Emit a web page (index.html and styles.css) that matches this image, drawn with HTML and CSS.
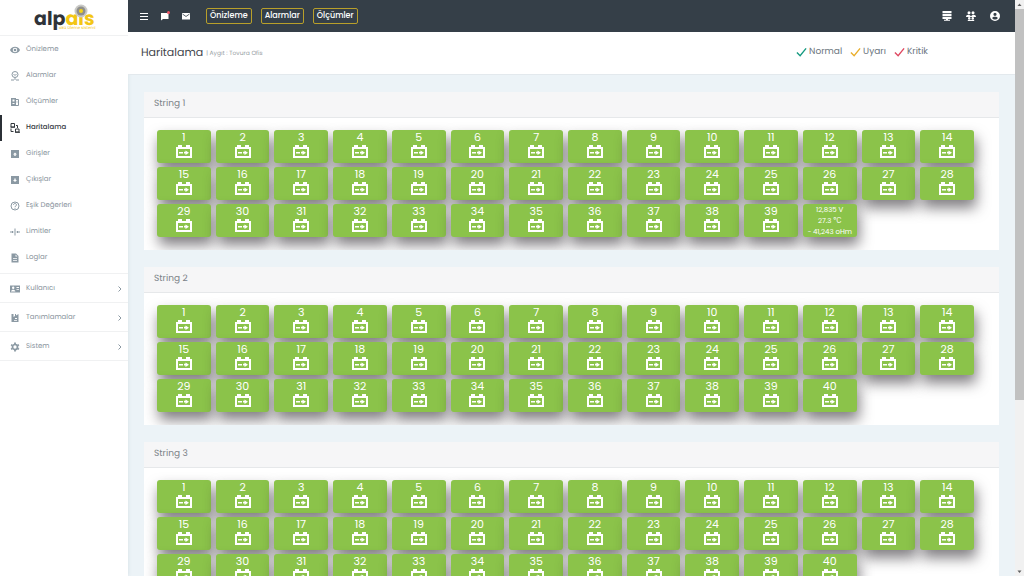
FILE: index.html
```html
<!DOCTYPE html>
<html lang="tr">
<head>
<meta charset="utf-8">
<title>Haritalama</title>
<link rel="stylesheet" href="styles.css">
</head>
<body>
<svg class="symbols" aria-hidden="true">
  <symbol id="battery" viewBox="0 0 16 13">
    <path fill-rule="evenodd" d="M2 0h4v2h4V0h4v2h2v11H0V2h2zM2 4v7h12V4zM3 7h4v1.500H3zM8 6.800h1.500V5.500L13 7.700 9.500 10V8.600H8z"/>
  </symbol>
  <symbol id="check" viewBox="0 0 12 10"><path d="M1 5.500l3.500 3.500L11 1" fill="none" stroke="currentColor" stroke-width="1.500"/></symbol>
  <symbol id="chevron" viewBox="0 0 6 8"><path d="M1.500 1.500l2.500 2.500-2.500 2.500" fill="none" stroke="currentColor"/></symbol>
</svg>
<div class="app">
  <aside class="sidebar">
    <a class="logo" href="#">
      <span class="logo-name">alp<span class="logo-accent">ais</span></span>
      <span class="logo-tag">akü izleme sistemi</span>
      <svg class="logo-sun" viewBox="0 0 14 14"><circle cx="7" cy="7" r="6.500" fill="#c9c9c6"/><circle cx="7" cy="7" r="4.500" fill="#8f8f8c"/><circle cx="7" cy="7" r="2" fill="#f3d21b"/></svg>
    </a>
    <nav>
      <ul class="menu">
        <li><a href="#"><svg viewBox="0 0 10 10"><path fill-rule="evenodd" d="M0 5c2-4.300 8-4.300 10 0-2 4.300-8 4.300-10 0zm5-2.300a2.300 2.300 0 1 0 0 4.600 2.300 2.300 0 0 0 0-4.600z"/><circle cx="5" cy="5" r="1.300"/></svg>Önizleme</a></li>
        <li><a href="#"><svg viewBox="0 0 10 10"><circle cx="5" cy="3.500" r="3" fill="none" stroke="currentColor"/><path d="M3.500 3l1.500 1.500L6.500 3M5 6.500V9M1 9h3M6 9h3" fill="none" stroke="currentColor"/></svg>Alarmlar</a></li>
        <li><a href="#"><svg viewBox="0 0 10 10"><path fill-rule="evenodd" d="M1 1h5v8H1zM2.500 2.500v2h2v-2zM2.500 6v1h2V6z"/><path d="M6 2.500h2.500v6H6M6.500 5h1" fill="none" stroke="currentColor"/></svg>Ölçümler</a></li>
        <li class="active"><a href="#" aria-current="page"><svg viewBox="0 0 10 10"><path d="M1 .5h3.500V4H1zM5.500 6H9v3H5.500zM1 5.500v3h2.500M6 2.500h1.500V5M.500 4.200H5M5 9.300h5" fill="none" stroke="currentColor"/></svg>Haritalama</a></li>
        <li><a href="#"><svg viewBox="0 0 10 10"><path fill-rule="evenodd" d="M1 1h8v8H1zM5 3.500l-2 2h1.300V7h1.400V5.500H7z"/></svg>Girişler</a></li>
        <li><a href="#"><svg viewBox="0 0 10 10"><path fill-rule="evenodd" d="M1 1h8v8H1zM5 7l2-2H5.700V3.500H4.300V5H3z"/></svg>Çıkışlar</a></li>
        <li><a href="#"><svg viewBox="0 0 10 10"><circle cx="5" cy="5" r="4" fill="none" stroke="currentColor"/><path d="M3.500 4c0-2 3-2 3 0 0 1-1.500 1-1.500 2M5 6.800v1" fill="none" stroke="currentColor"/></svg>Eşik Değerleri</a></li>
        <li><a href="#"><svg viewBox="0 0 10 10"><path d="M5 1.500v7M0 5h3.500M6.500 5H10M2.500 4v2M7.500 4v2" fill="none" stroke="currentColor"/></svg>Limitler</a></li>
        <li><a href="#"><svg viewBox="0 0 10 10"><path fill-rule="evenodd" d="M1.500.5h4.500L8.500 3v6.500h-7zM5.500 1.500v2h2zM3 5v.7h4V5zM3 7v.7h4V7z"/></svg>Loglar</a></li>
      </ul>
      <ul class="groups">
        <li><a href="#"><svg viewBox="0 0 10 10"><path fill-rule="evenodd" d="M0 1.500h10v7H0zM3.200 2.500a1.200 1.200 0 1 0 0 2.400 1.200 1.200 0 0 0 0-2.400zM1 7.500h4.400C5 5.200 1.400 5.200 1 7.500zM6.500 3v1H9V3zM6.500 5v.7H9V5z"/></svg>Kullanıcı<svg class="chevron"><use href="#chevron"/></svg></a></li>
        <li><a href="#"><svg viewBox="0 0 10 10"><path fill-rule="evenodd" d="M1.500 1h2v3L5 3V1h1v1.500L8.500 1v8h-7zM5 5v1h2V5zM4 7v.7h3V7z"/></svg>Tanımlamalar<svg class="chevron"><use href="#chevron"/></svg></a></li>
        <li><a href="#"><svg viewBox="0 0 10 10"><circle cx="5" cy="5" r="2.500" fill="none" stroke="currentColor" stroke-width="1.700"/><path d="M5 .5V2M5 8v1.500M1.100 2.800l1.300.7M7.600 6.500l1.300.7M1.100 7.200l1.300-.7M7.600 3.500l1.300-.7" stroke="currentColor" stroke-width="1.800"/></svg>Sistem<svg class="chevron"><use href="#chevron"/></svg></a></li>
      </ul>
    </nav>
  </aside>
  <div class="main">
    <header class="topbar">
      <button class="icon-btn" aria-label="Menü"><svg viewBox="0 0 10 10"><path d="M1 2.500h8M1 5.500h8M1 8.500h8" stroke="currentColor"/></svg></button>
      <button class="icon-btn" aria-label="Mesajlar"><svg viewBox="0 0 10 10"><path d="M1 2h7.500v6H3L1 9.500z"/><circle cx="8.500" cy="1.500" r="1.500" fill="#ef5565"/></svg></button>
      <button class="icon-btn" aria-label="Posta"><svg viewBox="0 0 10 10"><path d="M1 2h8v6.500H1z"/><path d="M1.500 3L5 5.500 8.500 3" fill="none" stroke="#353f48" stroke-width=".8"/></svg></button>
      <div class="shortcuts">
        <button>Önizleme</button><button>Alarmlar</button><button>Ölçümler</button>
      </div>
      <div class="tools">
        <button class="icon-btn" aria-label="Cihazlar"><svg viewBox="0 0 10 10"><path d="M.5 0h9v2.300h-9zM.5 3h9v2.300h-9zM.5 6h9v2h-9zM4 8h2v1H4zM2 8.700h6v1H2z"/></svg></button>
        <button class="icon-btn" aria-label="Kullanıcılar"><svg viewBox="0 0 10 10"><circle cx="3" cy="1.700" r="1.500"/><circle cx="7" cy="1.700" r="1.500"/><path d="M0 6c0-3 4-3 5-.5 1-2.500 5-2.500 5 .5z"/><circle cx="3.200" cy="7.300" r="1.200"/><circle cx="6.800" cy="7.300" r="1.200"/><path d="M1.600 10c0-2 2.600-2 3.400-.8.800-1.200 3.400-1.200 3.400.8z"/></svg></button>
        <button class="icon-btn" aria-label="Profil"><svg viewBox="0 0 10 10"><path fill-rule="evenodd" d="M5 0a5 5 0 1 0 0 10A5 5 0 0 0 5 0zm0 1.700a1.600 1.600 0 1 1 0 3.200 1.600 1.600 0 0 1 0-3.200zM2.200 7c.5-1.700 5.100-1.700 5.600 0-1 2-4.600 2-5.600 0z"/></svg></button>
      </div>
    </header>
    <div class="page-head">
      <h1>Haritalama</h1>
      <span class="device">| Aygıt : Tovura Ofis</span>
      <ul class="legend">
        <li><svg class="normal"><use href="#check"/></svg>Normal</li>
        <li><svg class="warning"><use href="#check"/></svg>Uyarı</li>
        <li><svg class="critical"><use href="#check"/></svg>Kritik</li>
      </ul>
    </div>
    <main class="content">
      <section class="card"><h2>String 1</h2><div class="cells" data-detail="40"></div></section>
      <section class="card"><h2>String 2</h2><div class="cells"></div></section>
      <section class="card"><h2>String 3</h2><div class="cells"></div></section>
    </main>
  </div>
  <div class="scrollbar" aria-hidden="true">
    <svg viewBox="0 0 9 9"><path d="M2.500 6l2-2.500 2 2.500z"/></svg>
    <div class="track"><div class="thumb"></div></div>
    <svg viewBox="0 0 9 9"><path d="M2.500 3.500l2 2.500 2-2.500z"/></svg>
  </div>
</div>
<script src="script.js"></script>
</body>
</html>
```
FILE: styles.css
```css
* { box-sizing: border-box; }
body {
  margin: 0;
  font-family: Poppins, Inter, sans-serif;
  font-size: 8px;
  line-height: 12px;
  color: #6c757d;
  background: #ecf3f7;
  text-rendering: geometricPrecision;
}
ul { list-style: none; margin: 0; padding: 0; }
a { color: inherit; text-decoration: none; }
button { font: inherit; color: inherit; border: 0; background: none; padding: 0; cursor: pointer; }
svg { fill: currentColor; flex: none; }
.symbols { position: absolute; width: 0; height: 0; }

.app { display: flex; height: 100vh; overflow: hidden; }

.sidebar { flex: none; width: 128px; background: #fff; box-shadow: 0 0 4px rgba(60, 80, 100, .12); }
.logo {
  position: relative;
  display: flex;
  flex-direction: column;
  height: 36px;
  padding: 10px 34px 0;
  border-bottom: 1px solid #f0f1f2;
}
.logo-name { font-size: 19px; line-height: 18px; font-weight: 700; color: #2f3338; }
.logo-accent { color: #f3c614; }
.logo-tag { font-size: 4px; line-height: 4px; margin-left: 25px; margin-top: -1px; color: #f3c614; white-space: nowrap; }
.logo-sun { position: absolute; left: 74px; top: 4px; width: 14px; height: 14px; }

.menu { padding: 1px 0 2px; }
.menu a, .groups a { display: flex; align-items: center; gap: 6px; padding: 0 5px 0 10px; color: #89949d; font-size: 7px; }
.menu a { height: 26px; }
.menu svg, .groups svg { width: 10px; height: 10px; color: #8b99a3; }
.menu .active a { padding-left: 8px; border-left: 2px solid #2b3036; color: #33383d; font-weight: 500; }
.menu .active svg { color: #33383d; }
.groups { border-bottom: 1px solid #f0f1f2; }
.groups a { height: 29px; padding-top: 1px; border-top: 1px solid #f0f1f2; }
.groups .chevron { width: 6px; height: 8px; margin-left: auto; }

.main { flex: 1; min-width: 0; }
.topbar { display: flex; align-items: center; height: 32px; padding: 0 15px 0 11px; gap: 11px; background: #353f48; color: #fff; }
.icon-btn { display: flex; }
.icon-btn svg { width: 10px; height: 10px; }
.shortcuts { display: flex; gap: 9px; margin-left: 4px; }
.shortcuts button { height: 16px; padding: 0 3px; border: 1px solid #b89f2a; border-radius: 2px; font-weight: 500; }
.tools { display: flex; gap: 14px; margin-left: auto; }

.page-head { display: flex; align-items: center; height: 43px; padding: 0 87px 2px 13px; background: #fff; border-bottom: 1px solid #e3e9ed; }
h1 { margin: 0; font-size: 11px; line-height: 16px; font-weight: 400; color: #3f464c; }
.device { margin: 3px 0 0 3px; font-size: 6px; line-height: 8px; color: #969da3; }
.legend { display: flex; gap: 8px; margin-left: auto; font-size: 9px; }
.legend li { display: flex; align-items: center; gap: 2px; }
.legend svg { width: 11px; height: 10px; }
.normal { color: #159a80; }
.warning { color: #e9ae2c; }
.critical { color: #df4861; }

.content { display: flex; flex-direction: column; gap: 17px; padding: 17px 16px; }
.card { background: #fff; overflow: hidden; }
h2 { margin: 0; padding: 6px 10px; border-bottom: 1px solid #e6e8ea; background: #f6f6f7; font-size: 9px; line-height: 13px; font-weight: 400; color: #7c8288; }
.cells { display: grid; grid-template-columns: repeat(14, 1fr); gap: 4px 5px; padding: 12px 25px 13px 13px; }
.cell {
  display: flex;
  flex-direction: column;
  align-items: center;
  gap: 1px;
  height: 33px;
  border-radius: 3px;
  background: #8bc34a;
  color: #fff;
  font-size: 11px;
  line-height: 14px;
  box-shadow: 2px 8px 14px rgba(45, 40, 46, .6);
}
.cell svg { width: 16px; height: 13px; }
.cell.detail { gap: 0; font-size: 7px; line-height: 11px; white-space: nowrap; }

.scrollbar { flex: none; display: flex; flex-direction: column; width: 9px; background: #f1f1f1; color: #606060; }
.scrollbar svg { width: 9px; height: 9px; }
.track { flex: 1; }
.thumb { height: 70%; background: #c1c1c1; }
```
FILE: script.js
```js
const CELL_COUNT = 40;
const readings = ["12,835 V", "27.3 ℃", "~ 41,243 oHm"];

document.querySelectorAll(".cells").forEach((grid) => {
  for (let n = 1; n <= CELL_COUNT; n++) {
    const cell = document.createElement("button");
    cell.className = "cell";
    if (String(n) === grid.dataset.detail) {
      cell.classList.add("detail");
      cell.innerHTML = readings.map((r) => `<span>${r}</span>`).join("");
    } else {
      cell.innerHTML = `<span>${n}</span><svg><use href="#battery"/></svg>`;
    }
    grid.append(cell);
  }
});
```
